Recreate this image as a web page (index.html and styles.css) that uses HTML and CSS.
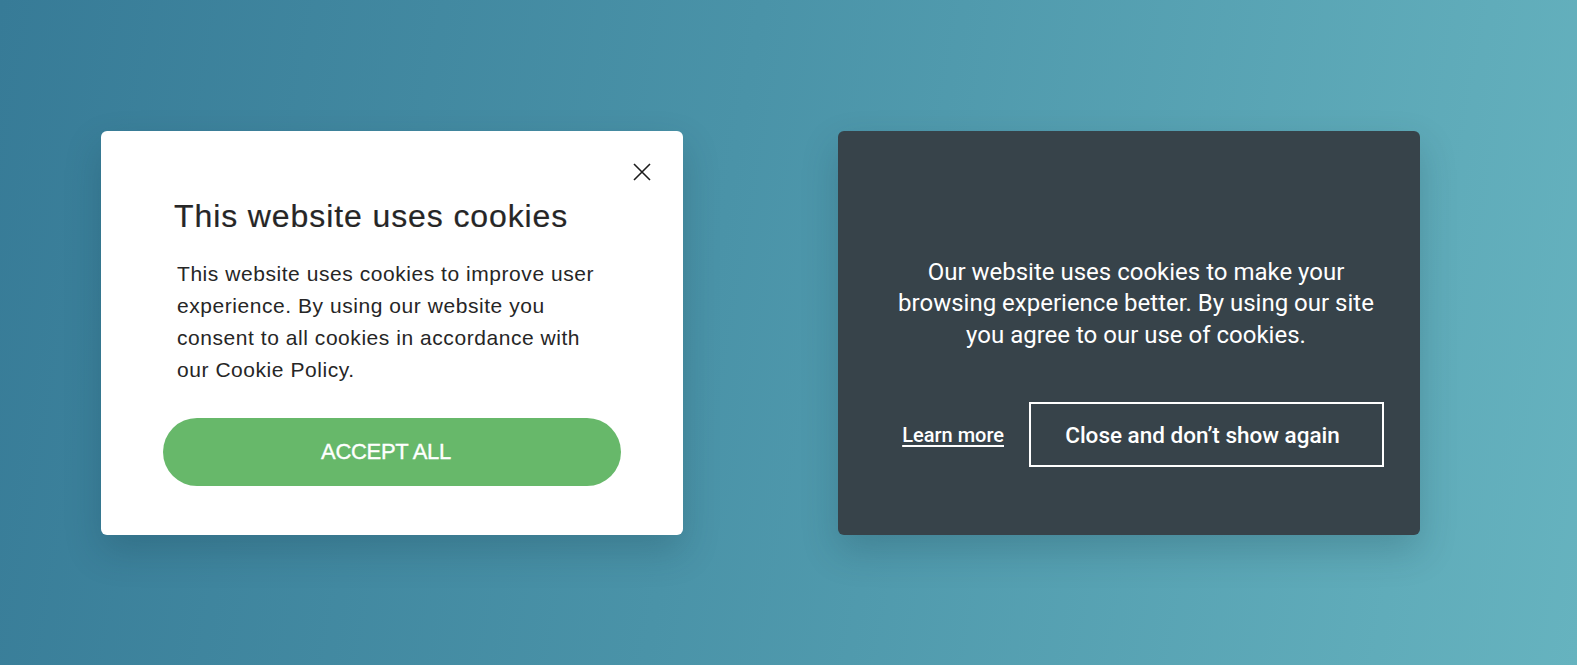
FILE: index.html
```html
<!DOCTYPE html>
<html lang="en">
<head>
    <meta charset="UTF-8">
    <meta name="viewport" content="width=device-width, initial-scale=1.0">
    <title>Cookie banners</title>
    <link rel="stylesheet" href="styles.css">
</head>
<body>
    <div class="stage">
        <!-- light popup -->
        <div class="card card-light">
            <button class="close-btn" aria-label="Close">
                <svg width="18" height="18" viewBox="0 0 18 18">
                    <path d="M1 1 L17 17 M17 1 L1 17" stroke="#1c1c1c" stroke-width="1.6" fill="none"/>
                </svg>
            </button>
            <h2 class="light-title">This website uses cookies</h2>
            <p class="light-text">This website uses cookies to improve user experience. By using our website you consent to all cookies in accordance with our Cookie Policy.</p>
            <button class="accept-btn">ACCEPT ALL</button>
        </div>

        <!-- dark banner -->
        <div class="card card-dark">
            <p class="dark-text">Our website uses cookies to make your browsing experience better. By using our site you agree to our use of cookies.</p>
            <div class="dark-actions">
                <a href="#" class="learn-link">Learn more</a>
                <button class="outline-btn">Close and don’t show again</button>
            </div>
        </div>
    </div>
</body>
</html>
```

FILE: styles.css
```css
html, body {
    margin: 0;
    padding: 0;
}
body {
    background: linear-gradient(100deg, #377b97 0%, #4a93a8 45%, #66b3bf 100%);
    font-family: 'Liberation Sans', Arial, sans-serif;
    height: 665px;
    overflow: hidden;
}
.stage {
    height: 100vh;
    display: flex;
    align-items: center;
    gap: 155px;
    padding-left: 101px;
}
.card {
    width: 582px;
    height: 404px;
    box-sizing: border-box;
    border-radius: 6px;
    box-shadow: 0 16px 36px rgba(20, 50, 65, 0.22);
}
.card-light {
    position: relative;
    background: #ffffff;
    padding: 67px 62px 0 62px;
}
.close-btn {
    position: absolute;
    top: 32px;
    right: 32px;
    width: 18px;
    height: 18px;
    padding: 0;
    border: none;
    background: none;
    cursor: pointer;
}
.close-btn svg {
    display: block;
}
.light-title {
    margin: 0 0 23px 11px;
    font-size: 32px;
    line-height: 37px;
    font-weight: 400;
    letter-spacing: 0.9px;
    color: #262626;
    -webkit-text-stroke: 0.2px #262626;
}
.light-text {
    margin: 0 0 32px 14px;
    font-size: 21px;
    line-height: 32.2px;
    letter-spacing: 0.55px;
    color: #262626;
    max-width: 440px;
}
.accept-btn {
    display: block;
    width: 100%;
    height: 68px;
    border: none;
    border-radius: 34px;
    background: #67b86a;
    color: #ffffff;
    font-family: 'Liberation Sans', Arial, sans-serif;
    font-size: 22px;
    letter-spacing: -0.3px;
    -webkit-text-stroke: 0.35px #ffffff;
    padding: 0 12px 0 0;
    cursor: pointer;
}
.card-dark {
    background: #37434a;
    color: #ffffff;
    padding: 126px 36px 0 50px;
    font-family: Roboto, 'Noto Sans', sans-serif;
}
.dark-text {
    margin: 0 0 51px 0;
    font-size: 24px;
    line-height: 31.5px;
    text-align: center;
}
.dark-actions {
    display: flex;
    justify-content: flex-end;
    align-items: center;
    gap: 25px;
}
.learn-link {
    color: #ffffff;
    font-size: 20px;
    font-weight: 500;
    text-decoration: underline;
    text-decoration-thickness: 1.5px;
    text-underline-offset: 3px;
}
.outline-btn {
    width: 355px;
    height: 65px;
    box-sizing: border-box;
    background: transparent;
    border: 2px solid #ffffff;
    color: #ffffff;
    font-family: Roboto, 'Noto Sans', sans-serif;
    font-size: 22.5px;
    font-weight: 500;
    padding: 0 8px 0 0;
    cursor: pointer;
}
```
